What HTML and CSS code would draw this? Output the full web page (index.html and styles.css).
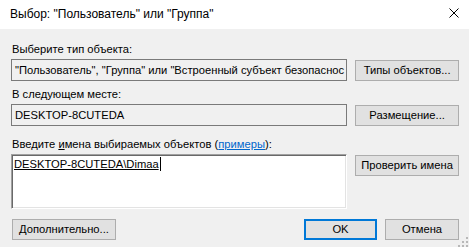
FILE: index.html
```html
<!DOCTYPE html>
<html lang="ru">
<head>
<meta charset="utf-8">
<title>Выбор</title>
<link rel="stylesheet" href="styles.css">
</head>
<body>
<div class="window">
  <div class="titlebar">
    <span class="title">Выбор: "Пользователь" или "Группа"</span>
    <svg class="close" width="10" height="10" viewBox="0 0 10 10"><path d="M0.5 0.5 L9.5 9.5 M9.5 0.5 L0.5 9.5" stroke="#000" stroke-width="1" fill="none"/></svg>
  </div>
  <div class="body">
    <div class="label">Выберите тип объекта:</div>
    <div class="row">
      <div class="field">"Пользователь", "Группа" или "Встроенный субъект безопаснос</div>
      <div class="btn">Типы объектов...</div>
    </div>
    <div class="label l2">В следующем месте:</div>
    <div class="row">
      <div class="field">DESKTOP-8CUTEDA</div>
      <div class="btn">Размещение...</div>
    </div>
    <div class="label l3">Введите <u>и</u>мена выбираемых объектов (<span class="link">примеры</span>):</div>
    <div class="row">
      <div class="area"><span class="entry">DESKTOP-8CUTEDA\Dimaa</span><span class="caret"></span></div>
      <div class="btn">Проверить имена</div>
    </div>
    <div class="footer">
      <div class="btn adv">Дополнительно...</div>
      <div class="spacer"></div>
      <div class="btn ok">OK</div>
      <div class="btn cancel">Отмена</div>
    </div>
  </div>
  <svg class="grip" width="10" height="10" viewBox="0 0 10 10">
    <rect x="8" y="0" width="2" height="2" fill="#b8b8b8"/>
    <rect x="4" y="4" width="2" height="2" fill="#b8b8b8"/>
    <rect x="8" y="4" width="2" height="2" fill="#b8b8b8"/>
    <rect x="0" y="8" width="2" height="2" fill="#b8b8b8"/>
    <rect x="4" y="8" width="2" height="2" fill="#b8b8b8"/>
    <rect x="8" y="8" width="2" height="2" fill="#b8b8b8"/>
  </svg>
</div>
</body>
</html>
```
FILE: styles.css
```css
html, body {
  margin: 0;
  padding: 0;
}
body {
  width: 469px;
  height: 247px;
  overflow: hidden;
  font-family: "Liberation Sans", Arial, sans-serif;
  font-size: 11.2px;
  color: #000;
}
.window {
  position: relative;
  width: 469px;
  height: 247px;
  background: #f0f0f0;
}
.titlebar {
  height: 29px;
  background: #fff;
  display: flex;
  align-items: center;
  padding-left: 10px;
  padding-right: 9px;
  box-sizing: border-box;
}
.title {
  flex: 1;
  font-size: 12px;
  line-height: 16px;
  margin-top: -1px;
}
.close {
  display: block;
  margin-top: -3px;
  margin-right: 1px;
}
.body {
  padding: 13px 10px 0 11px;
}
.label {
  line-height: 15px;
  height: 15px;
  margin-bottom: 2px;
  padding-left: 1px;
  white-space: nowrap;
}
.l2 { margin-top: 6px; }
.l3 { margin-top: 11px; }
.label u { text-decoration: underline; }
.link {
  color: #0066cc;
  text-decoration: underline;
}
.row {
  display: flex;
  align-items: flex-start;
  gap: 8px;
}
.field {
  width: 337px;
  height: 22px;
  box-sizing: border-box;
  border: 1px solid #7a7a7a;
  background: #f0f0f0;
  padding: 0 0 0 3px;
  line-height: 20px;
  white-space: nowrap;
  overflow: hidden;
}
.area {
  width: 337px;
  height: 55px;
  box-sizing: border-box;
  background: #fff;
  border-top: 1px solid #a0a0a0;
  border-left: 1px solid #a0a0a0;
  border-right: 1px solid #fff;
  border-bottom: 1px solid #fff;
  box-shadow: inset 1px 1px 0 #696969, inset -1px -1px 0 #e3e3e3;
  padding: 2px 0 0 2px;
  line-height: 14px;
  display: flex;
  align-items: flex-start;
}
.entry {
  text-decoration: underline;
  white-space: nowrap;
}
.caret {
  display: block;
  width: 1px;
  height: 14px;
  background: #000;
  margin-left: 1px;
}
.btn {
  width: 104px;
  height: 21px;
  box-sizing: border-box;
  margin-top: 1px;
  background: #e1e1e1;
  border: 1px solid #adadad;
  display: flex;
  align-items: center;
  justify-content: center;
  line-height: 15px;
  white-space: nowrap;
}
.footer {
  display: flex;
  align-items: flex-start;
  gap: 8px;
  margin-top: 9px;
}
.adv {
  margin-left: 1px;
}
.spacer { flex: 1; }
.ok {
  width: 73px;
  border: 2px solid #0078d7;
}
.cancel {
  width: 74px;
}
.grip {
  position: absolute;
  right: 1px;
  bottom: 0px;
  display: block;
}
```
